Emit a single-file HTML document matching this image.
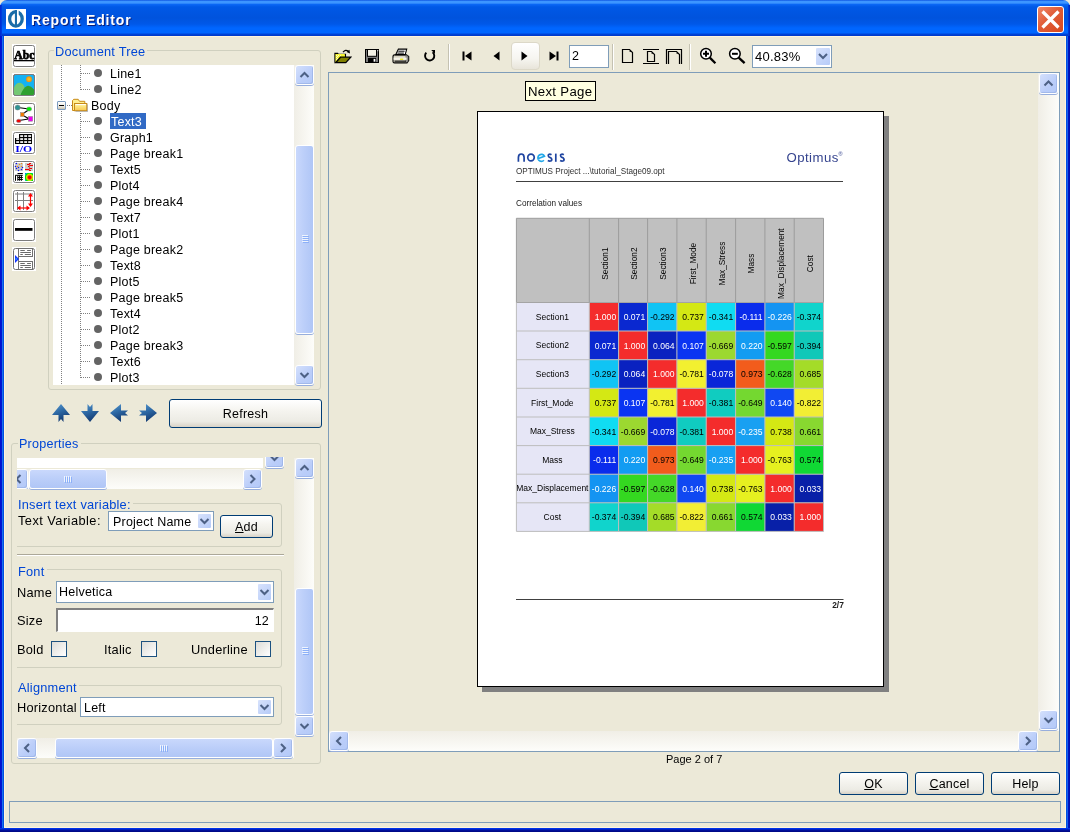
<!DOCTYPE html>
<html><head><meta charset="utf-8">
<style>
*{box-sizing:border-box}
html,body{margin:0;padding:0}
body{width:1070px;height:832px;overflow:hidden;position:relative;background:#ECE9D8;font-family:"Liberation Sans",sans-serif;font-size:12px;color:#000}
.a{position:absolute}
.t{position:absolute;white-space:nowrap;line-height:1;letter-spacing:0.22px}
/* frame */
#title{left:0;top:0;width:1070px;height:36px;border-radius:7px 7px 0 0;
background:linear-gradient(#0040D8 0px,#3D95FF 1px,#3D95FF 3px,#0A66F4 4.5px,#0058E6 7px,#0053DD 18px,#0058E8 24px,#0066FF 28px,#0066FF 33px,#0045D8 34px,#0038C8 36px)}
#lb{left:0;top:36px;width:4px;height:796px;background:linear-gradient(90deg,#0010D0 0,#0018D0 2px,#1870F0 2px,#1870F0 3px,#0050E0 3px)}
#rb{left:1066px;top:36px;width:4px;height:796px;background:linear-gradient(90deg,#0050E0 0,#0050E0 1px,#1860F0 1px,#1860F0 2px,#0018C8 2px,#0010A8 4px)}
#bb{left:0;top:828px;width:1070px;height:4px;background:linear-gradient(#0038F0 0,#0030E0 1px,#0010A0 2px,#000880 4px)}
.hl{background:#FFF5DC}
/* group box */
.gb{position:absolute;border:1px solid #D0D0BF;border-radius:3px}
.gt{position:absolute;color:#0046D5;background:#ECE9D8;white-space:nowrap;line-height:1;font-size:12.6px;padding:0 2px 0 1px;letter-spacing:0.22px}
/* xp button */
.btn{position:absolute;border:1px solid #003C74;border-radius:3px;background:linear-gradient(#FFFFFF 0%,#F5F4EF 40%,#ECEBE4 80%,#D8D2C6 100%);text-align:center;font-size:12.5px;line-height:1;letter-spacing:0.22px}
/* scrollbar parts */
.sbv{position:absolute;background:linear-gradient(90deg,#F0EEE6,#FDFDFA)}
.sbh{position:absolute;background:linear-gradient(#F0EEE6,#FDFDFA)}
.sbb{position:absolute;border:1px solid #fff;border-radius:3px;background:linear-gradient(135deg,#D4E0FC 0%,#BACDF9 60%,#B4CAF8 100%);box-shadow:0 1px 0 #97AEDC}
.sbb::after{content:"";position:absolute;inset:0;border-radius:2px;box-shadow:inset -1px -1px 0 rgba(120,150,210,.35)}
.thv{position:absolute;border:1px solid #fff;border-radius:3px;background:linear-gradient(90deg,#C9D8FC,#BBCEF9 50%,#B0C6F6);box-shadow:0 1px 0 #97AEDC}
.cb{position:absolute;border:1px solid #7F9DB9;background:#fff}
.dd{position:absolute;border:1px solid #fff;border-radius:2px;background:linear-gradient(135deg,#D7E2FC,#B6CBF8)}
.chk{position:absolute;width:13px;height:13px;border:1px solid #1C5180;background:linear-gradient(135deg,#DCDCD7,#FFFFFF)}
</style></head><body>
<div id="root" class="a" style="left:0;top:0;width:1070px;height:832px;will-change:transform;background:#ECE9D8;overflow:hidden">
<div id="title" class="a"></div>
<div id="lb" class="a"></div>
<div class="a" style="left:0;top:5px;width:2px;height:31px;background:linear-gradient(90deg,#0028D0,#0040E0)"></div>
<div class="a" style="left:1068px;top:5px;width:2px;height:31px;background:linear-gradient(90deg,#0040E0,#0020B8)"></div>
<div id="rb" class="a"></div>
<div id="bb" class="a"></div>
<div class="a hl" style="left:4px;top:36px;width:1062px;height:1px"></div>
<div class="a hl" style="left:4px;top:36px;width:1px;height:792px"></div>
<div class="a hl" style="left:4px;top:827px;width:1062px;height:1px"></div>
<div class="a hl" style="left:1065px;top:36px;width:1px;height:792px"></div>
<!-- title contents -->
<div class="a" style="left:6px;top:9px;width:20px;height:20px;background:#fff">
<svg width="20" height="20" viewBox="0 0 20 20"><ellipse cx="9.9" cy="9.9" rx="6.3" ry="7.2" fill="none" stroke="#1A6CA8" stroke-width="3.3"/><rect x="8.9" y="1.2" width="2.1" height="16" fill="#1A6CA8"/><rect x="11" y="0" width="1.7" height="5.8" fill="#fff"/></svg>
</div>
<div class="t" style="left:31px;top:13px;font-size:14px;font-weight:bold;color:#fff;letter-spacing:0.85px;text-shadow:1px 1px 0 #0A1E78">Report Editor</div>
<div class="a" style="left:1037px;top:6px;width:27px;height:27px;border:1px solid #fff;border-radius:3px;background:linear-gradient(135deg,#F08868 0%,#E05C38 45%,#D8481C 100%)">
<svg class="a" style="left:0;top:0" width="25" height="25" viewBox="0 0 25 25"><path d="M4.5 4.5 L20.5 20.5 M20.5 4.5 L4.5 20.5" stroke="#fff" stroke-width="3.2"/></svg>
</div>

<!-- left toolbar -->
<svg class="a" style="left:12px;top:44px" width="24" height="24" viewBox="0 0 24 24"><rect x="0" y="0" width="24" height="24" fill="#fff"/><rect x="1.5" y="1.5" width="21" height="21" rx="2" fill="#fff" stroke="#7C7C7C"/><text x="2.3" y="14.9" font-family="Liberation Serif" font-weight="bold" font-size="13" textLength="20" lengthAdjust="spacingAndGlyphs" stroke="#000" stroke-width=".75">Abc</text><rect x="2" y="16" width="20" height="1.3" fill="#000"/></svg>
<svg class="a" style="left:12px;top:73px" width="24" height="24" viewBox="0 0 24 24"><rect x="0" y="0" width="24" height="24" fill="#fff"/><rect x="1.5" y="1.5" width="21" height="21" rx="2" fill="#14B2F2" stroke="#7C7C7C"/><defs><radialGradient id="sun"><stop offset="0" stop-color="#F8D020"/><stop offset="1" stop-color="#F08C10"/></radialGradient></defs><circle cx="17" cy="6.2" r="2.9" fill="url(#sun)"/><path d="M2 22 L2 14.5 Q4 9.5 8 9.8 Q11 10.2 12.5 14 L16 22 Z" fill="#74C874"/><path d="M8.5 22 Q11 15 15 13 Q18.5 12 22 16.5 L22 22 Z" fill="#2FA030"/><rect x="1.5" y="1.5" width="21" height="21" rx="2" fill="none" stroke="#7C7C7C"/></svg>
<svg class="a" style="left:12px;top:102px" width="24" height="24" viewBox="0 0 24 24"><rect x="0" y="0" width="24" height="24" fill="#fff"/><rect x="1.5" y="1.5" width="21" height="21" rx="2" fill="#fff" stroke="#7C7C7C"/><path d="M6 5.5 L17 7 M16.5 8 L12 11 M12 14 L16.5 16.5 M7 18.5 L16.5 17" stroke="#000" stroke-width="1.1" fill="none"/><circle cx="5.6" cy="5.5" r="2.6" fill="#2F9494" stroke="#888" stroke-width=".5"/><ellipse cx="17.1" cy="7" rx="2.6" ry="2.1" fill="#00F000" stroke="#888" stroke-width=".5"/><rect x="8.5" y="10.6" width="3.6" height="3.9" fill="#F07800" stroke="#888" stroke-width=".5"/><rect x="16.4" y="14.5" width="4.3" height="4.7" fill="#F000F0" stroke="#888" stroke-width=".5"/><ellipse cx="6.7" cy="18.9" rx="2.3" ry="1.7" fill="#F00000" stroke="#888" stroke-width=".5"/></svg>
<svg class="a" style="left:12px;top:131px" width="24" height="24" viewBox="0 0 24 24"><rect x="0" y="0" width="24" height="24" fill="#fff"/><rect x="1.5" y="1.5" width="21" height="21" rx="2" fill="#fff" stroke="#7C7C7C"/><path d="M7 3 H20 V13 H3 V7 H7 Z" fill="#000"/><g fill="#fff"><rect x="8.2" y="4.2" width="2.9" height="1.7"/><rect x="12.2" y="4.2" width="2.9" height="1.7"/><rect x="16.2" y="4.2" width="2.9" height="1.7"/><rect x="4.2" y="7.2" width="2.9" height="1.7"/><rect x="8.2" y="7.2" width="2.9" height="1.7"/><rect x="12.2" y="7.2" width="2.9" height="1.7"/><rect x="16.2" y="7.2" width="2.9" height="1.7"/><rect x="4.2" y="10.2" width="2.9" height="1.7"/><rect x="8.2" y="10.2" width="2.9" height="1.7"/><rect x="12.2" y="10.2" width="2.9" height="1.7"/><rect x="16.2" y="10.2" width="2.9" height="1.7"/></g><text x="3.2" y="20.8" font-family="Liberation Serif" font-weight="bold" font-size="9" fill="#0000F0" textLength="17" lengthAdjust="spacingAndGlyphs">I/O</text></svg>
<svg class="a" style="left:12px;top:160px" width="24" height="24" viewBox="0 0 24 24"><rect x="0" y="0" width="24" height="24" fill="#fff"/><rect x="1.5" y="1.5" width="21" height="21" rx="2" fill="#fff" stroke="#7C7C7C"/><rect x="3" y="3" width="8" height="8" fill="#CACACA"/><g fill="#0A14F0"><circle cx="4.4" cy="3.6" r=".75"/><circle cx="3.5" cy="6.4" r=".75"/><circle cx="6.5" cy="7.5" r=".75"/><circle cx="4.5" cy="8.5" r=".75"/><circle cx="6.5" cy="10.4" r=".75"/><circle cx="9.5" cy="9.5" r=".75"/><circle cx="10.5" cy="7.5" r=".75"/></g><g fill="#F08C1C"><circle cx="7.5" cy="4.4" r=".7"/><circle cx="9.5" cy="3.5" r=".7"/><circle cx="5.4" cy="6.5" r=".7"/><circle cx="9.4" cy="6.4" r=".7"/></g><rect x="13" y="3" width="8" height="8" fill="#CACACA"/><path d="M17 3.5 H19 M15 4.5 H17.5 M17.5 5.5 H21 M16 6.5 H17 M17.5 8.5 H20 M13 9.5 H17 M17 10.5 H19" stroke="#F00000" stroke-width="1.1"/><path d="M17.4 3.5 V10.5" stroke="#F00000" stroke-width=".6"/><path d="M5.5 13.5 H10.8 M3.2 15.3 H10.8 M5.8 17.5 H10.8 M5.8 19.5 H10.8 M3.5 15.3 V20.8 M5.8 15.3 V20.8 M7.6 15.3 V20.8 M9.4 15.3 V20.8" stroke="#000" stroke-width="1" fill="none"/><defs><radialGradient id="hm" cx="17.6" cy="17.4" r="6.3" gradientUnits="userSpaceOnUse"><stop offset="0" stop-color="#F00000"/><stop offset=".2" stop-color="#F00000"/><stop offset=".38" stop-color="#F0A000"/><stop offset=".5" stop-color="#C0F000"/><stop offset=".66" stop-color="#00E000"/><stop offset=".84" stop-color="#00C8D0"/><stop offset="1" stop-color="#0010F0"/></radialGradient></defs><rect x="13" y="13" width="8" height="8" fill="url(#hm)"/></svg>
<svg class="a" style="left:12px;top:189px" width="24" height="24" viewBox="0 0 24 24"><rect x="0" y="0" width="24" height="24" fill="#fff"/><rect x="1.5" y="1.5" width="21" height="21" rx="2" fill="#fff" stroke="#7C7C7C"/><path d="M5.5 3 V21 M11.5 3 V21 M3 5 H21 M3 11.5 H21" stroke="#808080" stroke-width="1"/><path d="M18.5 5 V17" stroke="#F00" stroke-width="1.2"/><path d="M16 7.5 L18.5 4 L21 7.5 Z M16 14.5 L18.5 18 L21 14.5 Z" fill="#F00"/><path d="M6 19 H17" stroke="#F00" stroke-width="1.2"/><path d="M8.5 16.5 L5 19 L8.5 21.5 Z M14.5 16.5 L18 19 L14.5 21.5 Z" fill="#F00"/></svg>
<svg class="a" style="left:12px;top:218px" width="24" height="24" viewBox="0 0 24 24"><rect x="0" y="0" width="24" height="24" fill="#fff"/><rect x="1.5" y="1.5" width="21" height="21" rx="2" fill="#fff" stroke="#7C7C7C"/><rect x="3" y="10" width="17.5" height="2.8" fill="#000"/></svg>
<svg class="a" style="left:12px;top:247px" width="24" height="24" viewBox="0 0 24 24"><rect x="0" y="0" width="24" height="24" fill="#fff"/><rect x="1.5" y="1.5" width="21" height="21" rx="2" fill="#fff" stroke="#707070"/><path d="M6.5 1.5 V22.5" stroke="#707070"/><rect x="6.5" y="1.5" width="14" height="8" fill="none" stroke="#707070"/><rect x="6.5" y="14.5" width="14" height="8" fill="none" stroke="#707070"/><path d="M8.3 3.5 H12.8 M15.1 3.5 H18.9 M8.3 5.5 H18.9 M8.3 7.5 H10.8 M12.8 7.5 H18.9 M8.3 16.5 H12.8 M15.1 16.5 H18.9 M8.3 18.5 H18.9 M8.3 20.5 H10.8 M12.8 20.5 H18.9" stroke="#6A6A6A" stroke-width="1"/><path d="M3 8 L7 12 L3 16 Z" fill="#1030FF"/><path d="M3.6 10.5 L5.5 12 L3.6 13.5 Z" fill="#30A0FF"/></svg>

<!-- document tree -->
<div class="gb" style="left:48px;top:50px;width:273px;height:340px"></div>
<div class="gt" style="left:54px;top:46px;font-size:12.8px">Document Tree</div>
<div class="a" style="left:53px;top:65px;width:241px;height:320px;background:#fff;overflow:hidden">
<div class="a" style="left:8px;top:0;width:1px;height:36px;background:repeating-linear-gradient(#808080 0 1px,transparent 1px 2px)"></div>
<div class="a" style="left:8px;top:46px;width:1px;height:274px;background:repeating-linear-gradient(#808080 0 1px,transparent 1px 2px)"></div>
<div class="a" style="left:27px;top:0;width:1px;height:25px;background:repeating-linear-gradient(#808080 0 1px,transparent 1px 2px)"></div>
<div class="a" style="left:27px;top:48px;width:1px;height:265px;background:repeating-linear-gradient(#808080 0 1px,transparent 1px 2px)"></div>
<div class="a" style="left:28px;top:8px;width:9px;height:1px;background:repeating-linear-gradient(90deg,#808080 0 1px,transparent 1px 2px)"></div>
<div class="a" style="left:41px;top:4px;width:8px;height:8px;border-radius:50%;background:#646464"></div>
<div class="t" style="left:57px;top:3px;font-size:12.5px">Line1</div>
<div class="a" style="left:28px;top:24px;width:9px;height:1px;background:repeating-linear-gradient(90deg,#808080 0 1px,transparent 1px 2px)"></div>
<div class="a" style="left:41px;top:20px;width:8px;height:8px;border-radius:50%;background:#646464"></div>
<div class="t" style="left:57px;top:19px;font-size:12.5px">Line2</div>
<div class="a" style="left:4px;top:36px;width:9px;height:9px;border:1px solid #7C9CBF;border-radius:1px;background:linear-gradient(#FFFFFF,#E6E3D8 70%,#C8C2B0)"></div>
<div class="a" style="left:6px;top:40px;width:5px;height:1px;background:#000"></div>
<div class="a" style="left:14px;top:40px;width:5px;height:1px;background:repeating-linear-gradient(90deg,#808080 0 1px,transparent 1px 2px)"></div>
<svg class="a" style="left:17px;top:32px" width="19" height="16" viewBox="0 0 19 16"><defs><linearGradient id="fold" x1="0" y1="0" x2="0" y2="1"><stop offset="0" stop-color="#FFF8A0"/><stop offset="1" stop-color="#F8C850"/></linearGradient></defs><rect x="5.5" y="7.3" width="12.5" height="7.6" fill="#5A6A90" opacity=".45"/><path d="M2.5 13.5 V3.5 L3.8 2.3 H8.2 L9.5 4.3 H14.8 V6.5 H4.5 V13.5 Z" fill="#FFF090" stroke="#C88A18" stroke-width="1"/><rect x="4.5" y="6.5" width="12.3" height="7.2" fill="url(#fold)" stroke="#C88A18" stroke-width="1"/><path d="M5.5 7.6 H15.8" stroke="#fff" stroke-width="1"/></svg>
<div class="t" style="left:38px;top:35px;font-size:12.5px">Body</div>
<div class="a" style="left:28px;top:56px;width:9px;height:1px;background:repeating-linear-gradient(90deg,#808080 0 1px,transparent 1px 2px)"></div>
<div class="a" style="left:41px;top:52px;width:8px;height:8px;border-radius:50%;background:#646464"></div>
<div class="a" style="left:57px;top:48px;width:36px;height:16px;background:#316AC5"></div>
<div class="t" style="left:57px;top:51px;font-size:12.5px;color:#fff;width:36px;padding-left:1px">Text3</div>
<div class="a" style="left:28px;top:72px;width:9px;height:1px;background:repeating-linear-gradient(90deg,#808080 0 1px,transparent 1px 2px)"></div>
<div class="a" style="left:41px;top:68px;width:8px;height:8px;border-radius:50%;background:#646464"></div>
<div class="t" style="left:57px;top:67px;font-size:12.5px">Graph1</div>
<div class="a" style="left:28px;top:88px;width:9px;height:1px;background:repeating-linear-gradient(90deg,#808080 0 1px,transparent 1px 2px)"></div>
<div class="a" style="left:41px;top:84px;width:8px;height:8px;border-radius:50%;background:#646464"></div>
<div class="t" style="left:57px;top:83px;font-size:12.5px">Page break1</div>
<div class="a" style="left:28px;top:104px;width:9px;height:1px;background:repeating-linear-gradient(90deg,#808080 0 1px,transparent 1px 2px)"></div>
<div class="a" style="left:41px;top:100px;width:8px;height:8px;border-radius:50%;background:#646464"></div>
<div class="t" style="left:57px;top:99px;font-size:12.5px">Text5</div>
<div class="a" style="left:28px;top:120px;width:9px;height:1px;background:repeating-linear-gradient(90deg,#808080 0 1px,transparent 1px 2px)"></div>
<div class="a" style="left:41px;top:116px;width:8px;height:8px;border-radius:50%;background:#646464"></div>
<div class="t" style="left:57px;top:115px;font-size:12.5px">Plot4</div>
<div class="a" style="left:28px;top:136px;width:9px;height:1px;background:repeating-linear-gradient(90deg,#808080 0 1px,transparent 1px 2px)"></div>
<div class="a" style="left:41px;top:132px;width:8px;height:8px;border-radius:50%;background:#646464"></div>
<div class="t" style="left:57px;top:131px;font-size:12.5px">Page break4</div>
<div class="a" style="left:28px;top:152px;width:9px;height:1px;background:repeating-linear-gradient(90deg,#808080 0 1px,transparent 1px 2px)"></div>
<div class="a" style="left:41px;top:148px;width:8px;height:8px;border-radius:50%;background:#646464"></div>
<div class="t" style="left:57px;top:147px;font-size:12.5px">Text7</div>
<div class="a" style="left:28px;top:168px;width:9px;height:1px;background:repeating-linear-gradient(90deg,#808080 0 1px,transparent 1px 2px)"></div>
<div class="a" style="left:41px;top:164px;width:8px;height:8px;border-radius:50%;background:#646464"></div>
<div class="t" style="left:57px;top:163px;font-size:12.5px">Plot1</div>
<div class="a" style="left:28px;top:184px;width:9px;height:1px;background:repeating-linear-gradient(90deg,#808080 0 1px,transparent 1px 2px)"></div>
<div class="a" style="left:41px;top:180px;width:8px;height:8px;border-radius:50%;background:#646464"></div>
<div class="t" style="left:57px;top:179px;font-size:12.5px">Page break2</div>
<div class="a" style="left:28px;top:200px;width:9px;height:1px;background:repeating-linear-gradient(90deg,#808080 0 1px,transparent 1px 2px)"></div>
<div class="a" style="left:41px;top:196px;width:8px;height:8px;border-radius:50%;background:#646464"></div>
<div class="t" style="left:57px;top:195px;font-size:12.5px">Text8</div>
<div class="a" style="left:28px;top:216px;width:9px;height:1px;background:repeating-linear-gradient(90deg,#808080 0 1px,transparent 1px 2px)"></div>
<div class="a" style="left:41px;top:212px;width:8px;height:8px;border-radius:50%;background:#646464"></div>
<div class="t" style="left:57px;top:211px;font-size:12.5px">Plot5</div>
<div class="a" style="left:28px;top:232px;width:9px;height:1px;background:repeating-linear-gradient(90deg,#808080 0 1px,transparent 1px 2px)"></div>
<div class="a" style="left:41px;top:228px;width:8px;height:8px;border-radius:50%;background:#646464"></div>
<div class="t" style="left:57px;top:227px;font-size:12.5px">Page break5</div>
<div class="a" style="left:28px;top:248px;width:9px;height:1px;background:repeating-linear-gradient(90deg,#808080 0 1px,transparent 1px 2px)"></div>
<div class="a" style="left:41px;top:244px;width:8px;height:8px;border-radius:50%;background:#646464"></div>
<div class="t" style="left:57px;top:243px;font-size:12.5px">Text4</div>
<div class="a" style="left:28px;top:264px;width:9px;height:1px;background:repeating-linear-gradient(90deg,#808080 0 1px,transparent 1px 2px)"></div>
<div class="a" style="left:41px;top:260px;width:8px;height:8px;border-radius:50%;background:#646464"></div>
<div class="t" style="left:57px;top:259px;font-size:12.5px">Plot2</div>
<div class="a" style="left:28px;top:280px;width:9px;height:1px;background:repeating-linear-gradient(90deg,#808080 0 1px,transparent 1px 2px)"></div>
<div class="a" style="left:41px;top:276px;width:8px;height:8px;border-radius:50%;background:#646464"></div>
<div class="t" style="left:57px;top:275px;font-size:12.5px">Page break3</div>
<div class="a" style="left:28px;top:296px;width:9px;height:1px;background:repeating-linear-gradient(90deg,#808080 0 1px,transparent 1px 2px)"></div>
<div class="a" style="left:41px;top:292px;width:8px;height:8px;border-radius:50%;background:#646464"></div>
<div class="t" style="left:57px;top:291px;font-size:12.5px">Text6</div>
<div class="a" style="left:28px;top:312px;width:9px;height:1px;background:repeating-linear-gradient(90deg,#808080 0 1px,transparent 1px 2px)"></div>
<div class="a" style="left:41px;top:308px;width:8px;height:8px;border-radius:50%;background:#646464"></div>
<div class="t" style="left:57px;top:307px;font-size:12.5px">Plot3</div>
</div>
<div class="sbv" style="left:294px;top:65px;width:20px;height:320px"></div>
<div class="sbb" style="left:295px;top:65px;width:19px;height:20px"><svg class="a" style="left:0;top:0" width="17" height="18"><path d="M4.5 11 L8.5 7 L12.5 11" stroke="#4D6185" stroke-width="2" fill="none"/></svg></div>
<div class="thv" style="left:295px;top:145px;width:19px;height:189px"><svg class="a" style="left:5px;top:89px" width="8" height="8"><path d="M1 0.5H7M1 2.5H7M1 4.5H7M1 6.5H7" stroke="#EEF4FE" stroke-width="1"/><path d="M2 1.5H8M2 3.5H8M2 5.5H8M2 7.5H8" stroke="#8CB0F8" stroke-width="1"/></svg></div>
<div class="sbb" style="left:295px;top:365px;width:19px;height:20px"><svg class="a" style="left:0;top:0" width="17" height="18"><path d="M4.5 7 L8.5 11 L12.5 7" stroke="#4D6185" stroke-width="2" fill="none"/></svg></div>
<svg width="0" height="0" style="position:absolute"><defs><linearGradient id="arg" x1="0" y1="0" x2=".4" y2="1"><stop offset="0" stop-color="#5A9CD2"/><stop offset=".5" stop-color="#2E6AA6"/><stop offset="1" stop-color="#143C74"/></linearGradient></defs></svg>
<svg class="a" style="left:51.5px;top:404px" width="18" height="18" viewBox="0 0 18 18"><path d="M9 0 L18 11 L11.5 11 L11.5 18 L9 15 L6.5 18 L6.5 11 L0 11 Z" fill="url(#arg)"/></svg>
<svg class="a" style="left:80.5px;top:404px" width="18" height="18" viewBox="0 0 18 18"><path d="M9 18 L0 7 L6.5 7 L6.5 0 L9 3 L11.5 0 L11.5 7 L18 7 Z" fill="url(#arg)"/></svg>
<svg class="a" style="left:109.5px;top:404px" width="18" height="18" viewBox="0 0 18 18"><path d="M0 9 L11 0 L11 6.5 L18 6.5 L15 9 L18 11.5 L11 11.5 L11 18 Z" fill="url(#arg)"/></svg>
<svg class="a" style="left:138.5px;top:404px" width="18" height="18" viewBox="0 0 18 18"><path d="M18 9 L7 18 L7 11.5 L0 11.5 L3 9 L0 6.5 L7 6.5 L7 0 Z" fill="url(#arg)"/></svg>
<div class="btn" style="left:169px;top:399px;width:153px;height:29px;padding-top:8px">Refresh</div>
<div class="gb" style="left:11px;top:443px;width:310px;height:321px"></div>
<div class="gt" style="left:18px;top:438px;font-size:12.6px">Properties</div>
<div class="a" style="left:17px;top:458px;width:246px;height:10px;background:#fff"></div>
<div class="a" style="left:17px;top:457px;width:278px;height:12px;overflow:hidden"><div class="sbb"  style="left:248px;top:-9px;width:19px;height:20px"><svg class="a" style="left:0;top:0" width="17" height="18"><path d="M4.5 7.0 L8.5 11.0 L12.5 7.0" stroke="#4D6185" stroke-width="2" fill="none"/></svg></div></div>
<div class="sbh" style="left:17px;top:469px;width:244px;height:20px"></div>
<div class="a" style="left:17px;top:469px;width:11px;height:20px;overflow:hidden"><div class="sbb" style="left:-8px;top:0px;width:19px;height:20px"><svg class="a" style="left:0;top:0" width="17" height="18"><path d="M10.5 5.0 L6.5 9.0 L10.5 13.0" stroke="#4D6185" stroke-width="2" fill="none"/></svg></div></div>
<div class="thv" style="left:29px;top:469px;width:78px;height:20px;background:linear-gradient(#C9D8FC,#BBCEF9 50%,#B0C6F6)"><svg class="a" style="left:34px;top:5px" width="9" height="9"><path d="M0.5 1V7M2.5 1V7M4.5 1V7M6.5 1V7" stroke="#EEF4FE" stroke-width="1"/><path d="M1.5 2V8M3.5 2V8M5.5 2V8M7.5 2V8" stroke="#8CB0F8" stroke-width="1"/></svg></div>
<div class="sbb" style="left:243px;top:469px;width:19px;height:20px"><svg class="a" style="left:0;top:0" width="17" height="18"><path d="M6.5 5.0 L10.5 9.0 L6.5 13.0" stroke="#4D6185" stroke-width="2" fill="none"/></svg></div>
<div class="sbv" style="left:294px;top:458px;width:20px;height:278px"></div>
<div class="sbb" style="left:295px;top:458px;width:19px;height:20px"><svg class="a" style="left:0;top:0" width="17" height="18"><path d="M4.5 11.0 L8.5 7.0 L12.5 11.0" stroke="#4D6185" stroke-width="2" fill="none"/></svg></div>
<div class="thv" style="left:295px;top:588px;width:19px;height:127px"><svg class="a" style="left:5px;top:58px" width="8" height="8"><path d="M1 0.5H7M1 2.5H7M1 4.5H7M1 6.5H7" stroke="#EEF4FE" stroke-width="1"/><path d="M2 1.5H8M2 3.5H8M2 5.5H8M2 7.5H8" stroke="#8CB0F8" stroke-width="1"/></svg></div>
<div class="sbb" style="left:295px;top:716px;width:19px;height:20px"><svg class="a" style="left:0;top:0" width="17" height="18"><path d="M4.5 7.0 L8.5 11.0 L12.5 7.0" stroke="#4D6185" stroke-width="2" fill="none"/></svg></div>
<div class="a" style="left:17px;top:455px;width:278px;height:281px;overflow:hidden">
<div class="gb" style="left:-10px;top:48px;width:275px;height:44px"></div>
<div class="gt" style="left:0px;top:44px;font-size:12.8px;padding:0 2px 0 1px">Insert text variable:</div>
<div class="t" style="left:1px;top:60px;font-size:12.8px;letter-spacing:0.45px">Text Variable:</div>
<div class="cb" style="left:91px;top:56px;width:106px;height:20px"></div>
<div class="t" style="left:96px;top:61px;font-size:12.5px">Project Name</div>
<div class="dd" style="left:180px;top:58px;width:15px;height:16px"><svg class="a" style="left:0;top:0" width="13" height="14"><path d="M2.5 5 L6.5 9 L10.5 5" stroke="#4D6185" stroke-width="2" fill="none"/></svg></div>
<div class="btn" style="left:203px;top:60px;width:53px;height:23px;padding-top:5px"><span style="text-decoration:underline">A</span>dd</div>
<div class="a" style="left:0px;top:99px;width:267px;height:1px;background:#ACA899"></div>
<div class="a" style="left:0px;top:100px;width:267px;height:1px;background:#fff"></div>
<div class="gb" style="left:-10px;top:114px;width:275px;height:99px"></div>
<div class="gt" style="left:0px;top:111px;font-size:12.8px">Font</div>
<div class="t" style="left:0px;top:132px;font-size:12.8px">Name</div>
<div class="cb" style="left:39px;top:126px;width:218px;height:22px"></div>
<div class="t" style="left:42px;top:131px;font-size:12.5px">Helvetica</div>
<div class="dd" style="left:240px;top:128px;width:15px;height:18px"><svg class="a" style="left:0;top:0" width="13" height="16"><path d="M2.5 6 L6.5 10 L10.5 6" stroke="#4D6185" stroke-width="2" fill="none"/></svg></div>
<div class="t" style="left:0px;top:160px;font-size:12.8px">Size</div>
<div class="a" style="left:39px;top:153px;width:218px;height:24px;background:#fff;border-top:2px solid #808080;border-left:2px solid #808080;border-right:1px solid #fff;border-bottom:1px solid #fff"></div>
<div class="t" style="left:230px;top:160px;font-size:12.5px;width:22px;text-align:right">12</div>
<div class="t" style="left:0px;top:189px;font-size:12.8px">Bold</div>
<div class="chk" style="left:34px;top:186px;width:16px;height:16px;border:1.3px solid #1C5180"></div>
<div class="t" style="left:87px;top:189px;font-size:12.8px">Italic</div>
<div class="chk" style="left:124px;top:186px;width:16px;height:16px;border:1.3px solid #1C5180"></div>
<div class="t" style="left:174px;top:189px;font-size:12.8px">Underline</div>
<div class="chk" style="left:238px;top:186px;width:16px;height:16px;border:1.3px solid #1C5180"></div>
<div class="gb" style="left:-10px;top:230px;width:275px;height:40px"></div>
<div class="gt" style="left:0px;top:227px;font-size:12.8px">Alignment</div>
<div class="t" style="left:0px;top:247px;font-size:12.8px">Horizontal</div>
<div class="cb" style="left:63px;top:242px;width:194px;height:20px"></div>
<div class="t" style="left:67px;top:247px;font-size:12.5px">Left</div>
<div class="dd" style="left:240px;top:244px;width:15px;height:16px"><svg class="a" style="left:0;top:0" width="13" height="14"><path d="M2.5 5 L6.5 9 L10.5 5" stroke="#4D6185" stroke-width="2" fill="none"/></svg></div>
</div>
<div class="sbh" style="left:17px;top:738px;width:277px;height:20px"></div>
<div class="sbb" style="left:17px;top:738px;width:20px;height:20px"><svg class="a" style="left:0;top:0" width="18" height="18"><path d="M11.0 5.0 L7.0 9.0 L11.0 13.0" stroke="#4D6185" stroke-width="2" fill="none"/></svg></div>
<div class="thv" style="left:55px;top:738px;width:218px;height:20px;background:linear-gradient(#C9D8FC,#BBCEF9 50%,#B0C6F6)"><svg class="a" style="left:104px;top:5px" width="9" height="9"><path d="M0.5 1V7M2.5 1V7M4.5 1V7M6.5 1V7" stroke="#EEF4FE" stroke-width="1"/><path d="M1.5 2V8M3.5 2V8M5.5 2V8M7.5 2V8" stroke="#8CB0F8" stroke-width="1"/></svg></div>
<div class="sbb" style="left:273px;top:738px;width:20px;height:20px"><svg class="a" style="left:0;top:0" width="18" height="18"><path d="M7.0 5.0 L11.0 9.0 L7.0 13.0" stroke="#4D6185" stroke-width="2" fill="none"/></svg></div>
<!-- preview toolbar -->
<svg class="a" style="left:333px;top:48px" width="19" height="16" viewBox="0 0 19 16"><path d="M2 14.7 V5.3 H4.6 L5.2 6.4 H12.4 V9.2" fill="#F4F430" stroke="#000" stroke-width="1.3"/><rect x="2.6" y="6" width="9.2" height="8" fill="#F4F430"/><g fill="#fff" opacity=".7"><rect x="3" y="7" width="1" height="1"/><rect x="5" y="7" width="1" height="1"/><rect x="7" y="7" width="1" height="1"/><rect x="4" y="8" width="1" height="1"/><rect x="3" y="9" width="1" height="1"/><rect x="4" y="10" width="1" height="1"/><rect x="3" y="11" width="1" height="1"/></g><path d="M2.6 14.7 L7.5 9.2 H17.7 L12.8 14.7 Z" fill="#808000" stroke="#000" stroke-width="1.3" stroke-linejoin="miter"/><path d="M10 4.2 Q12.5 1 15.3 3.3" fill="none" stroke="#000" stroke-width="1.2"/><path d="M13.6 3.9 L17 5.6 L16.4 1.8 Z" fill="#000"/></svg>
<svg class="a" style="left:364px;top:48px" width="16" height="16" viewBox="0 0 16 16"><rect x="1" y="1" width="14" height="14" fill="#000"/><rect x="2" y="2" width="12" height="12" fill="#7A7A7A"/><rect x="3.5" y="1.5" width="9" height="6.8" fill="#F4F2E6" stroke="#000" stroke-width="1"/><rect x="4" y="10" width="8" height="5" fill="#000"/><rect x="9.6" y="10.9" width="1.8" height="2.8" fill="#fff"/><rect x="13.3" y="2.2" width="1" height="1" fill="#fff"/></svg>
<svg class="a" style="left:392px;top:48px" width="18" height="16" viewBox="0 0 18 16"><path d="M1 8.5 Q1 6.9 2.5 6.9 H14.5 L16.7 8.5 V12.5 L15 14.9 H2.5 Q1 14.9 1 13.5 Z" fill="#D8D4C4" stroke="#000" stroke-width="1.1"/><rect x="13.4" y="7.4" width="2.8" height="6.8" fill="#707070" opacity=".7"/><rect x="1.6" y="9.6" width="13" height="2.2" fill="#F4F2E8"/><rect x="8.1" y="10.6" width="3.1" height="1.2" fill="#E8E000"/><rect x="2.5" y="12.6" width="11.5" height="1.1" fill="#000"/><path d="M3.8 6.6 L6.4 1.1 H14.7 L13.2 6.6 Z" fill="#fff" stroke="#000" stroke-width="1.1"/><path d="M6.3 3.2 H12.6 M5.4 5.1 H11.9" stroke="#000" stroke-width="1"/></svg>
<svg class="a" style="left:423px;top:48px" width="14" height="16" viewBox="0 0 14 16"><path d="M3.3 4.7 A4.6 4.6 0 1 0 9.6 4.3" fill="none" stroke="#000" stroke-width="1.9"/><path d="M8.2 1.9 L12 1.9 L12 5.8 Z" fill="#000"/></svg>
<div class="a" style="left:448px;top:44px;width:1px;height:26px;background:#C5C2B2"></div>
<div class="a" style="left:449px;top:44px;width:1px;height:26px;background:#FFFFFF"></div>
<div class="a" style="left:612px;top:44px;width:1px;height:26px;background:#C5C2B2"></div>
<div class="a" style="left:613px;top:44px;width:1px;height:26px;background:#FFFFFF"></div>
<div class="a" style="left:689px;top:44px;width:1px;height:26px;background:#C5C2B2"></div>
<div class="a" style="left:690px;top:44px;width:1px;height:26px;background:#FFFFFF"></div>
<svg class="a" style="left:462px;top:51px" width="10" height="10" viewBox="0 0 10 10"><rect x="0.5" y="0.5" width="2" height="9" fill="#000"/><path d="M9.5 0.5 V9.5 L3 5 Z" fill="#000"/></svg>
<svg class="a" style="left:493px;top:51px" width="7" height="10" viewBox="0 0 7 10"><path d="M6.5 0.5 V9.5 L0.5 5 Z" fill="#000"/></svg>
<div class="a" style="left:511px;top:42px;width:29px;height:28px;border-radius:4px;border:1px solid #DCD8C8;background:linear-gradient(#FFFFFF,#F6F5F0 60%,#E8E5DA)"></div>
<svg class="a" style="left:521px;top:51px" width="7" height="10" viewBox="0 0 7 10"><path d="M0.5 0.5 V9.5 L6.5 5 Z" fill="#000"/></svg>
<svg class="a" style="left:549px;top:51px" width="10" height="10" viewBox="0 0 10 10"><path d="M0.5 0.5 V9.5 L7 5 Z" fill="#000"/><rect x="7.5" y="0.5" width="2" height="9" fill="#000"/></svg>
<div class="cb" style="left:569px;top:45px;width:40px;height:23px"></div>
<div class="t" style="left:572px;top:50px;font-size:12.5px">2</div>
<svg class="a" style="left:621px;top:48px" width="13" height="16" viewBox="0 0 13 16"><path d="M1.5 1.5 H8.5 L11.5 4.5 V14.5 H1.5 Z" fill="none" stroke="#000" stroke-width="1.2"/><rect x="8.6" y="2.6" width="1.3" height="1.3" fill="#000"/></svg>
<svg class="a" style="left:642px;top:48px" width="18" height="17" viewBox="0 0 18 17"><path d="M1 1.5 H17 M1 15.5 H17" stroke="#000" stroke-width="1.2"/><path d="M5.5 3.5 H9.5 L12.5 6.5 V13.5 H5.5 Z" fill="none" stroke="#000" stroke-width="1.2"/><rect x="9.6" y="4.6" width="1.2" height="1.2" fill="#000"/></svg>
<svg class="a" style="left:665px;top:48px" width="18" height="16" viewBox="0 0 18 16"><path d="M1.5 16 V1.5 H16.5 V16" fill="none" stroke="#000" stroke-width="1.2"/><path d="M3.5 16 V3.5 H11.5 L14.5 6.5 V16" fill="none" stroke="#000" stroke-width="1.2"/><rect x="11.6" y="4.6" width="1.2" height="1.2" fill="#000"/></svg>
<svg class="a" style="left:698px;top:46px" width="20" height="20" viewBox="0 0 20 20"><circle cx="8" cy="7.8" r="5.3" fill="#fff" stroke="#000" stroke-width="1.5"/><path d="M8 4.8 V10.8 M5 7.8 H11" stroke="#000" stroke-width="2"/><path d="M11.8 11.6 L17.4 17.2" stroke="#000" stroke-width="2.3"/></svg>
<svg class="a" style="left:728px;top:46px" width="20" height="20" viewBox="0 0 20 20"><circle cx="6.9" cy="7.8" r="5.3" fill="#fff" stroke="#000" stroke-width="1.5"/><path d="M4 7.8 H9.8" stroke="#000" stroke-width="2"/><path d="M10.7 11.6 L16.6 17.2" stroke="#000" stroke-width="2.3"/></svg>
<div class="cb" style="left:752px;top:45px;width:80px;height:23px"></div>
<div class="t" style="left:755px;top:50px;font-size:13px">40.83%</div>
<div class="dd" style="left:815px;top:47px;width:16px;height:19px"><svg class="a" style="left:0;top:0" width="14" height="17"><path d="M3 6 L7 10 L11 6" stroke="#4D6185" stroke-width="2" fill="none"/></svg></div>
<div class="a" style="left:328px;top:72px;width:732px;height:680px;border:1px solid #7F9DB9;background:#ECE9D8"></div>
<div class="sbv" style="left:1038px;top:73px;width:21px;height:658px"></div>
<div class="sbb" style="left:1039px;top:73px;width:19px;height:21px"><svg class="a" style="left:0;top:0" width="17" height="19"><path d="M4.5 11.5 L8.5 7.5 L12.5 11.5" stroke="#4D6185" stroke-width="2" fill="none"/></svg></div>
<div class="sbb" style="left:1039px;top:710px;width:19px;height:20px"><svg class="a" style="left:0;top:0" width="17" height="18"><path d="M4.5 7.0 L8.5 11.0 L12.5 7.0" stroke="#4D6185" stroke-width="2" fill="none"/></svg></div>
<div class="sbh" style="left:329px;top:731px;width:709px;height:20px"></div>
<div class="sbb" style="left:329px;top:731px;width:20px;height:20px"><svg class="a" style="left:0;top:0" width="18" height="18"><path d="M11.0 5.0 L7.0 9.0 L11.0 13.0" stroke="#4D6185" stroke-width="2" fill="none"/></svg></div>
<div class="sbb" style="left:1018px;top:731px;width:20px;height:20px"><svg class="a" style="left:0;top:0" width="18" height="18"><path d="M7.0 5.0 L11.0 9.0 L7.0 13.0" stroke="#4D6185" stroke-width="2" fill="none"/></svg></div>
<div class="a" style="left:525px;top:81px;width:71px;height:20px;border:1px solid #000;background:#FFFFE1"></div>
<div class="t" style="left:528px;top:85px;font-size:13.2px;letter-spacing:0.3px">Next Page</div>
<div class="a" style="left:482px;top:116px;width:407px;height:576px;background:#808080"></div>
<div class="a" style="left:477px;top:111px;width:407px;height:576px;border:1px solid #000;background:#fff"></div>
<div class="t" style="left:666px;top:754px;font-size:11px;letter-spacing:0">Page 2 of 7</div>
<div class="btn" style="left:839px;top:772px;width:69px;height:23px;padding-top:5px"><span style="text-decoration:underline">O</span>K</div>
<div class="btn" style="left:915px;top:772px;width:69px;height:23px;padding-top:5px"><span style="text-decoration:underline">C</span>ancel</div>
<div class="btn" style="left:991px;top:772px;width:69px;height:23px;padding-top:5px">Help</div>
<div class="a" style="left:9px;top:801px;width:1052px;height:22px;border:1px solid #7F9DB9"></div>
<svg class="a" style="left:0;top:0" width="1070" height="832" viewBox="0 0 1070 832" font-family="Liberation Sans">
<g fill="none" stroke="#1E44A0" stroke-width="1.7" stroke-linecap="butt">
<path d="M518.4 161.8 V157.6 A2.85 3.6 0 0 1 524.1 157.6 V161.8"/>
<ellipse cx="531" cy="157.5" rx="3.25" ry="3.4"/>
<path d="M551.5 154.8 Q550 153.8 548.8 154.4 Q547.6 155.4 549 157 L551 158 Q552.4 159.5 551.2 160.8 Q549.6 161.6 547.8 160.6"/>
<path d="M555.8 153.6 V161.8"/>
<path d="M563.8 154.8 Q562.3 153.8 561.1 154.4 Q559.9 155.4 561.3 157 L563.3 158 Q564.7 159.5 563.5 160.8 Q561.9 161.6 560.1 160.6"/>
</g>
<g fill="none" stroke="#22A8E8" stroke-width="1.7"><path d="M537.6 158.8 L544.4 156.2 A3.45 3.5 0 1 0 543.9 160.2"/></g>
<text x="516" y="174.2" font-size="8.15" fill="#303030">OPTIMUS Project ...\tutorial_Stage09.opt</text>
<text x="786.5" y="162" font-size="13.2" fill="#34438E" letter-spacing="0.45">Optimus</text>
<text x="838.5" y="155.6" font-size="5.5" fill="#34438E">®</text>
<rect x="516" y="181" width="327" height="1" fill="#404040"/>
<text x="516" y="206" font-size="8.2" fill="#202020">Correlation values</text>
<rect x="516.4" y="218.3" width="307.1" height="84.19999999999999" fill="#C0C0C0"/>
<rect x="516.4" y="302.5" width="72.89999999999998" height="28.5" fill="#E6E6F6"/>
<text x="552.35" y="319.65" font-size="8.5" text-anchor="middle" fill="#000">Section1</text>
<rect x="589.3" y="302.5" width="29.300000000000068" height="28.5" fill="#F42C2C"/>
<text x="616.2" y="319.95" font-size="8.6" text-anchor="end" fill="#fff">1.000</text>
<rect x="618.6" y="302.5" width="29.0" height="28.5" fill="#0A28D0"/>
<text x="645.2" y="319.95" font-size="8.6" text-anchor="end" fill="#fff">0.071</text>
<rect x="647.6" y="302.5" width="29.299999999999955" height="28.5" fill="#10C4F4"/>
<text x="674.5" y="319.95" font-size="8.6" text-anchor="end" fill="#000">-0.292</text>
<rect x="676.9" y="302.5" width="29.300000000000068" height="28.5" fill="#D4E814"/>
<text x="703.8000000000001" y="319.95" font-size="8.6" text-anchor="end" fill="#000">0.737</text>
<rect x="706.2" y="302.5" width="29.399999999999977" height="28.5" fill="#10DCF2"/>
<text x="733.2" y="319.95" font-size="8.6" text-anchor="end" fill="#000">-0.341</text>
<rect x="735.6" y="302.5" width="29.299999999999955" height="28.5" fill="#0A2CEC"/>
<text x="762.5" y="319.95" font-size="8.6" text-anchor="end" fill="#fff">-0.111</text>
<rect x="764.9" y="302.5" width="29.300000000000068" height="28.5" fill="#1494F2"/>
<text x="791.8000000000001" y="319.95" font-size="8.6" text-anchor="end" fill="#fff">-0.226</text>
<rect x="794.2" y="302.5" width="29.299999999999955" height="28.5" fill="#10D4CC"/>
<text x="821.1" y="319.95" font-size="8.6" text-anchor="end" fill="#000">-0.374</text>
<rect x="516.4" y="331.0" width="72.89999999999998" height="28.69999999999999" fill="#E6E6F6"/>
<text x="552.35" y="348.25" font-size="8.5" text-anchor="middle" fill="#000">Section2</text>
<rect x="589.3" y="331.0" width="29.300000000000068" height="28.69999999999999" fill="#0A28D0"/>
<text x="616.2" y="348.55" font-size="8.6" text-anchor="end" fill="#fff">0.071</text>
<rect x="618.6" y="331.0" width="29.0" height="28.69999999999999" fill="#F42C2C"/>
<text x="645.2" y="348.55" font-size="8.6" text-anchor="end" fill="#fff">1.000</text>
<rect x="647.6" y="331.0" width="29.299999999999955" height="28.69999999999999" fill="#0A22C0"/>
<text x="674.5" y="348.55" font-size="8.6" text-anchor="end" fill="#fff">0.064</text>
<rect x="676.9" y="331.0" width="29.300000000000068" height="28.69999999999999" fill="#0A34F2"/>
<text x="703.8000000000001" y="348.55" font-size="8.6" text-anchor="end" fill="#fff">0.107</text>
<rect x="706.2" y="331.0" width="29.399999999999977" height="28.69999999999999" fill="#9CD830"/>
<text x="733.2" y="348.55" font-size="8.6" text-anchor="end" fill="#000">-0.669</text>
<rect x="735.6" y="331.0" width="29.299999999999955" height="28.69999999999999" fill="#129CF2"/>
<text x="762.5" y="348.55" font-size="8.6" text-anchor="end" fill="#fff">0.220</text>
<rect x="764.9" y="331.0" width="29.300000000000068" height="28.69999999999999" fill="#34D820"/>
<text x="791.8000000000001" y="348.55" font-size="8.6" text-anchor="end" fill="#000">-0.597</text>
<rect x="794.2" y="331.0" width="29.299999999999955" height="28.69999999999999" fill="#10C8B8"/>
<text x="821.1" y="348.55" font-size="8.6" text-anchor="end" fill="#000">-0.394</text>
<rect x="516.4" y="359.7" width="72.89999999999998" height="28.600000000000023" fill="#E6E6F6"/>
<text x="552.35" y="376.9" font-size="8.5" text-anchor="middle" fill="#000">Section3</text>
<rect x="589.3" y="359.7" width="29.300000000000068" height="28.600000000000023" fill="#10C4F4"/>
<text x="616.2" y="377.2" font-size="8.6" text-anchor="end" fill="#000">-0.292</text>
<rect x="618.6" y="359.7" width="29.0" height="28.600000000000023" fill="#0A22C0"/>
<text x="645.2" y="377.2" font-size="8.6" text-anchor="end" fill="#fff">0.064</text>
<rect x="647.6" y="359.7" width="29.299999999999955" height="28.600000000000023" fill="#F42C2C"/>
<text x="674.5" y="377.2" font-size="8.6" text-anchor="end" fill="#fff">1.000</text>
<rect x="676.9" y="359.7" width="29.300000000000068" height="28.600000000000023" fill="#F2F030"/>
<text x="703.8000000000001" y="377.2" font-size="8.6" text-anchor="end" fill="#000">-0.781</text>
<rect x="706.2" y="359.7" width="29.399999999999977" height="28.600000000000023" fill="#0A26D8"/>
<text x="733.2" y="377.2" font-size="8.6" text-anchor="end" fill="#fff">-0.078</text>
<rect x="735.6" y="359.7" width="29.299999999999955" height="28.600000000000023" fill="#F25C1C"/>
<text x="762.5" y="377.2" font-size="8.6" text-anchor="end" fill="#000">0.973</text>
<rect x="764.9" y="359.7" width="29.300000000000068" height="28.600000000000023" fill="#44D828"/>
<text x="791.8000000000001" y="377.2" font-size="8.6" text-anchor="end" fill="#000">-0.628</text>
<rect x="794.2" y="359.7" width="29.299999999999955" height="28.600000000000023" fill="#A4DC28"/>
<text x="821.1" y="377.2" font-size="8.6" text-anchor="end" fill="#000">0.685</text>
<rect x="516.4" y="388.3" width="72.89999999999998" height="28.69999999999999" fill="#E6E6F6"/>
<text x="552.35" y="405.54999999999995" font-size="8.5" text-anchor="middle" fill="#000">First_Mode</text>
<rect x="589.3" y="388.3" width="29.300000000000068" height="28.69999999999999" fill="#D4E814"/>
<text x="616.2" y="405.84999999999997" font-size="8.6" text-anchor="end" fill="#000">0.737</text>
<rect x="618.6" y="388.3" width="29.0" height="28.69999999999999" fill="#0A34F2"/>
<text x="645.2" y="405.84999999999997" font-size="8.6" text-anchor="end" fill="#fff">0.107</text>
<rect x="647.6" y="388.3" width="29.299999999999955" height="28.69999999999999" fill="#F2F030"/>
<text x="674.5" y="405.84999999999997" font-size="8.6" text-anchor="end" fill="#000">-0.781</text>
<rect x="676.9" y="388.3" width="29.300000000000068" height="28.69999999999999" fill="#F42C2C"/>
<text x="703.8000000000001" y="405.84999999999997" font-size="8.6" text-anchor="end" fill="#fff">1.000</text>
<rect x="706.2" y="388.3" width="29.399999999999977" height="28.69999999999999" fill="#10CCC0"/>
<text x="733.2" y="405.84999999999997" font-size="8.6" text-anchor="end" fill="#000">-0.381</text>
<rect x="735.6" y="388.3" width="29.299999999999955" height="28.69999999999999" fill="#74D830"/>
<text x="762.5" y="405.84999999999997" font-size="8.6" text-anchor="end" fill="#000">-0.649</text>
<rect x="764.9" y="388.3" width="29.300000000000068" height="28.69999999999999" fill="#1048F2"/>
<text x="791.8000000000001" y="405.84999999999997" font-size="8.6" text-anchor="end" fill="#fff">0.140</text>
<rect x="794.2" y="388.3" width="29.299999999999955" height="28.69999999999999" fill="#F2EE34"/>
<text x="821.1" y="405.84999999999997" font-size="8.6" text-anchor="end" fill="#000">-0.822</text>
<rect x="516.4" y="417.0" width="72.89999999999998" height="28.600000000000023" fill="#E6E6F6"/>
<text x="552.35" y="434.2" font-size="8.5" text-anchor="middle" fill="#000">Max_Stress</text>
<rect x="589.3" y="417.0" width="29.300000000000068" height="28.600000000000023" fill="#10DCF2"/>
<text x="616.2" y="434.5" font-size="8.6" text-anchor="end" fill="#000">-0.341</text>
<rect x="618.6" y="417.0" width="29.0" height="28.600000000000023" fill="#9CD830"/>
<text x="645.2" y="434.5" font-size="8.6" text-anchor="end" fill="#000">-0.669</text>
<rect x="647.6" y="417.0" width="29.299999999999955" height="28.600000000000023" fill="#0A26D8"/>
<text x="674.5" y="434.5" font-size="8.6" text-anchor="end" fill="#fff">-0.078</text>
<rect x="676.9" y="417.0" width="29.300000000000068" height="28.600000000000023" fill="#10CCC0"/>
<text x="703.8000000000001" y="434.5" font-size="8.6" text-anchor="end" fill="#000">-0.381</text>
<rect x="706.2" y="417.0" width="29.399999999999977" height="28.600000000000023" fill="#F42C2C"/>
<text x="733.2" y="434.5" font-size="8.6" text-anchor="end" fill="#fff">1.000</text>
<rect x="735.6" y="417.0" width="29.299999999999955" height="28.600000000000023" fill="#18A0F2"/>
<text x="762.5" y="434.5" font-size="8.6" text-anchor="end" fill="#fff">-0.235</text>
<rect x="764.9" y="417.0" width="29.300000000000068" height="28.600000000000023" fill="#D4E814"/>
<text x="791.8000000000001" y="434.5" font-size="8.6" text-anchor="end" fill="#000">0.738</text>
<rect x="794.2" y="417.0" width="29.299999999999955" height="28.600000000000023" fill="#88D830"/>
<text x="821.1" y="434.5" font-size="8.6" text-anchor="end" fill="#000">0.661</text>
<rect x="516.4" y="445.6" width="72.89999999999998" height="28.599999999999966" fill="#E6E6F6"/>
<text x="552.35" y="462.79999999999995" font-size="8.5" text-anchor="middle" fill="#000">Mass</text>
<rect x="589.3" y="445.6" width="29.300000000000068" height="28.599999999999966" fill="#0A2CEC"/>
<text x="616.2" y="463.09999999999997" font-size="8.6" text-anchor="end" fill="#fff">-0.111</text>
<rect x="618.6" y="445.6" width="29.0" height="28.599999999999966" fill="#129CF2"/>
<text x="645.2" y="463.09999999999997" font-size="8.6" text-anchor="end" fill="#fff">0.220</text>
<rect x="647.6" y="445.6" width="29.299999999999955" height="28.599999999999966" fill="#F25C1C"/>
<text x="674.5" y="463.09999999999997" font-size="8.6" text-anchor="end" fill="#000">0.973</text>
<rect x="676.9" y="445.6" width="29.300000000000068" height="28.599999999999966" fill="#74D830"/>
<text x="703.8000000000001" y="463.09999999999997" font-size="8.6" text-anchor="end" fill="#000">-0.649</text>
<rect x="706.2" y="445.6" width="29.399999999999977" height="28.599999999999966" fill="#18A0F2"/>
<text x="733.2" y="463.09999999999997" font-size="8.6" text-anchor="end" fill="#fff">-0.235</text>
<rect x="735.6" y="445.6" width="29.299999999999955" height="28.599999999999966" fill="#F42C2C"/>
<text x="762.5" y="463.09999999999997" font-size="8.6" text-anchor="end" fill="#fff">1.000</text>
<rect x="764.9" y="445.6" width="29.300000000000068" height="28.599999999999966" fill="#E6F020"/>
<text x="791.8000000000001" y="463.09999999999997" font-size="8.6" text-anchor="end" fill="#000">-0.763</text>
<rect x="794.2" y="445.6" width="29.299999999999955" height="28.599999999999966" fill="#10D834"/>
<text x="821.1" y="463.09999999999997" font-size="8.6" text-anchor="end" fill="#000">0.574</text>
<rect x="516.4" y="474.2" width="72.89999999999998" height="28.600000000000023" fill="#E6E6F6"/>
<text x="552.35" y="491.4" font-size="8.5" text-anchor="middle" fill="#000">Max_Displacement</text>
<rect x="589.3" y="474.2" width="29.300000000000068" height="28.600000000000023" fill="#1494F2"/>
<text x="616.2" y="491.7" font-size="8.6" text-anchor="end" fill="#fff">-0.226</text>
<rect x="618.6" y="474.2" width="29.0" height="28.600000000000023" fill="#34D820"/>
<text x="645.2" y="491.7" font-size="8.6" text-anchor="end" fill="#000">-0.597</text>
<rect x="647.6" y="474.2" width="29.299999999999955" height="28.600000000000023" fill="#44D828"/>
<text x="674.5" y="491.7" font-size="8.6" text-anchor="end" fill="#000">-0.628</text>
<rect x="676.9" y="474.2" width="29.300000000000068" height="28.600000000000023" fill="#1048F2"/>
<text x="703.8000000000001" y="491.7" font-size="8.6" text-anchor="end" fill="#fff">0.140</text>
<rect x="706.2" y="474.2" width="29.399999999999977" height="28.600000000000023" fill="#D4E814"/>
<text x="733.2" y="491.7" font-size="8.6" text-anchor="end" fill="#000">0.738</text>
<rect x="735.6" y="474.2" width="29.299999999999955" height="28.600000000000023" fill="#E6F020"/>
<text x="762.5" y="491.7" font-size="8.6" text-anchor="end" fill="#000">-0.763</text>
<rect x="764.9" y="474.2" width="29.300000000000068" height="28.600000000000023" fill="#F42C2C"/>
<text x="791.8000000000001" y="491.7" font-size="8.6" text-anchor="end" fill="#fff">1.000</text>
<rect x="794.2" y="474.2" width="29.299999999999955" height="28.600000000000023" fill="#0820A8"/>
<text x="821.1" y="491.7" font-size="8.6" text-anchor="end" fill="#fff">0.033</text>
<rect x="516.4" y="502.8" width="72.89999999999998" height="28.599999999999966" fill="#E6E6F6"/>
<text x="552.35" y="520.0" font-size="8.5" text-anchor="middle" fill="#000">Cost</text>
<rect x="589.3" y="502.8" width="29.300000000000068" height="28.599999999999966" fill="#10D4CC"/>
<text x="616.2" y="520.3000000000001" font-size="8.6" text-anchor="end" fill="#000">-0.374</text>
<rect x="618.6" y="502.8" width="29.0" height="28.599999999999966" fill="#10C8B8"/>
<text x="645.2" y="520.3000000000001" font-size="8.6" text-anchor="end" fill="#000">-0.394</text>
<rect x="647.6" y="502.8" width="29.299999999999955" height="28.599999999999966" fill="#A4DC28"/>
<text x="674.5" y="520.3000000000001" font-size="8.6" text-anchor="end" fill="#000">0.685</text>
<rect x="676.9" y="502.8" width="29.300000000000068" height="28.599999999999966" fill="#F2EE34"/>
<text x="703.8000000000001" y="520.3000000000001" font-size="8.6" text-anchor="end" fill="#000">-0.822</text>
<rect x="706.2" y="502.8" width="29.399999999999977" height="28.599999999999966" fill="#88D830"/>
<text x="733.2" y="520.3000000000001" font-size="8.6" text-anchor="end" fill="#000">0.661</text>
<rect x="735.6" y="502.8" width="29.299999999999955" height="28.599999999999966" fill="#10D834"/>
<text x="762.5" y="520.3000000000001" font-size="8.6" text-anchor="end" fill="#000">0.574</text>
<rect x="764.9" y="502.8" width="29.300000000000068" height="28.599999999999966" fill="#0820A8"/>
<text x="791.8000000000001" y="520.3000000000001" font-size="8.6" text-anchor="end" fill="#fff">0.033</text>
<rect x="794.2" y="502.8" width="29.299999999999955" height="28.599999999999966" fill="#F42C2C"/>
<text x="821.1" y="520.3000000000001" font-size="8.6" text-anchor="end" fill="#fff">1.000</text>
<text transform="translate(608.1500000000001,263.6) rotate(-90)" font-size="8.3" text-anchor="middle" fill="#000">Section1</text>
<text transform="translate(637.3000000000001,263.6) rotate(-90)" font-size="8.3" text-anchor="middle" fill="#000">Section2</text>
<text transform="translate(666.45,263.6) rotate(-90)" font-size="8.3" text-anchor="middle" fill="#000">Section3</text>
<text transform="translate(695.75,263.6) rotate(-90)" font-size="8.3" text-anchor="middle" fill="#000">First_Mode</text>
<text transform="translate(725.1000000000001,263.6) rotate(-90)" font-size="8.3" text-anchor="middle" fill="#000">Max_Stress</text>
<text transform="translate(754.45,263.6) rotate(-90)" font-size="8.3" text-anchor="middle" fill="#000">Mass</text>
<text transform="translate(783.75,263.6) rotate(-90)" font-size="8.3" text-anchor="middle" fill="#000">Max_Displacement</text>
<text transform="translate(813.0500000000001,263.6) rotate(-90)" font-size="8.3" text-anchor="middle" fill="#000">Cost</text>
<rect x="515.9" y="218.3" width="1" height="84.19999999999999" fill="#9C9C9C"/>
<rect x="515.9" y="302.5" width="1" height="228.89999999999998" fill="#BDBDBD"/>
<rect x="588.8" y="218.3" width="1" height="84.19999999999999" fill="#9C9C9C"/>
<rect x="588.8" y="302.5" width="1" height="228.89999999999998" fill="#BDBDBD"/>
<rect x="618.1" y="218.3" width="1" height="84.19999999999999" fill="#9C9C9C"/>
<rect x="618.1" y="302.5" width="1" height="228.89999999999998" fill="#BDBDBD"/>
<rect x="647.1" y="218.3" width="1" height="84.19999999999999" fill="#9C9C9C"/>
<rect x="647.1" y="302.5" width="1" height="228.89999999999998" fill="#BDBDBD"/>
<rect x="676.4" y="218.3" width="1" height="84.19999999999999" fill="#9C9C9C"/>
<rect x="676.4" y="302.5" width="1" height="228.89999999999998" fill="#BDBDBD"/>
<rect x="705.7" y="218.3" width="1" height="84.19999999999999" fill="#9C9C9C"/>
<rect x="705.7" y="302.5" width="1" height="228.89999999999998" fill="#BDBDBD"/>
<rect x="735.1" y="218.3" width="1" height="84.19999999999999" fill="#9C9C9C"/>
<rect x="735.1" y="302.5" width="1" height="228.89999999999998" fill="#BDBDBD"/>
<rect x="764.4" y="218.3" width="1" height="84.19999999999999" fill="#9C9C9C"/>
<rect x="764.4" y="302.5" width="1" height="228.89999999999998" fill="#BDBDBD"/>
<rect x="793.7" y="218.3" width="1" height="84.19999999999999" fill="#9C9C9C"/>
<rect x="793.7" y="302.5" width="1" height="228.89999999999998" fill="#BDBDBD"/>
<rect x="823.0" y="218.3" width="1" height="84.19999999999999" fill="#9C9C9C"/>
<rect x="823.0" y="302.5" width="1" height="228.89999999999998" fill="#BDBDBD"/>
<rect x="516.4" y="217.8" width="307.1" height="1" fill="#9C9C9C"/>
<rect x="516.4" y="302.0" width="307.1" height="1" fill="#A4A4A4"/>
<rect x="516.4" y="330.5" width="307.1" height="1" fill="#BDBDBD"/>
<rect x="516.4" y="359.2" width="307.1" height="1" fill="#BDBDBD"/>
<rect x="516.4" y="387.8" width="307.1" height="1" fill="#BDBDBD"/>
<rect x="516.4" y="416.5" width="307.1" height="1" fill="#BDBDBD"/>
<rect x="516.4" y="445.1" width="307.1" height="1" fill="#BDBDBD"/>
<rect x="516.4" y="473.7" width="307.1" height="1" fill="#BDBDBD"/>
<rect x="516.4" y="502.3" width="307.1" height="1" fill="#BDBDBD"/>
<rect x="516.4" y="530.9" width="307.1" height="1" fill="#BDBDBD"/>
<rect x="516" y="599" width="327.5" height="1" fill="#404040"/>
<text x="843.8" y="607.8" font-size="8.4" font-weight="bold" text-anchor="end" fill="#202020">2/7</text>
</svg>
</div>
</body></html>
